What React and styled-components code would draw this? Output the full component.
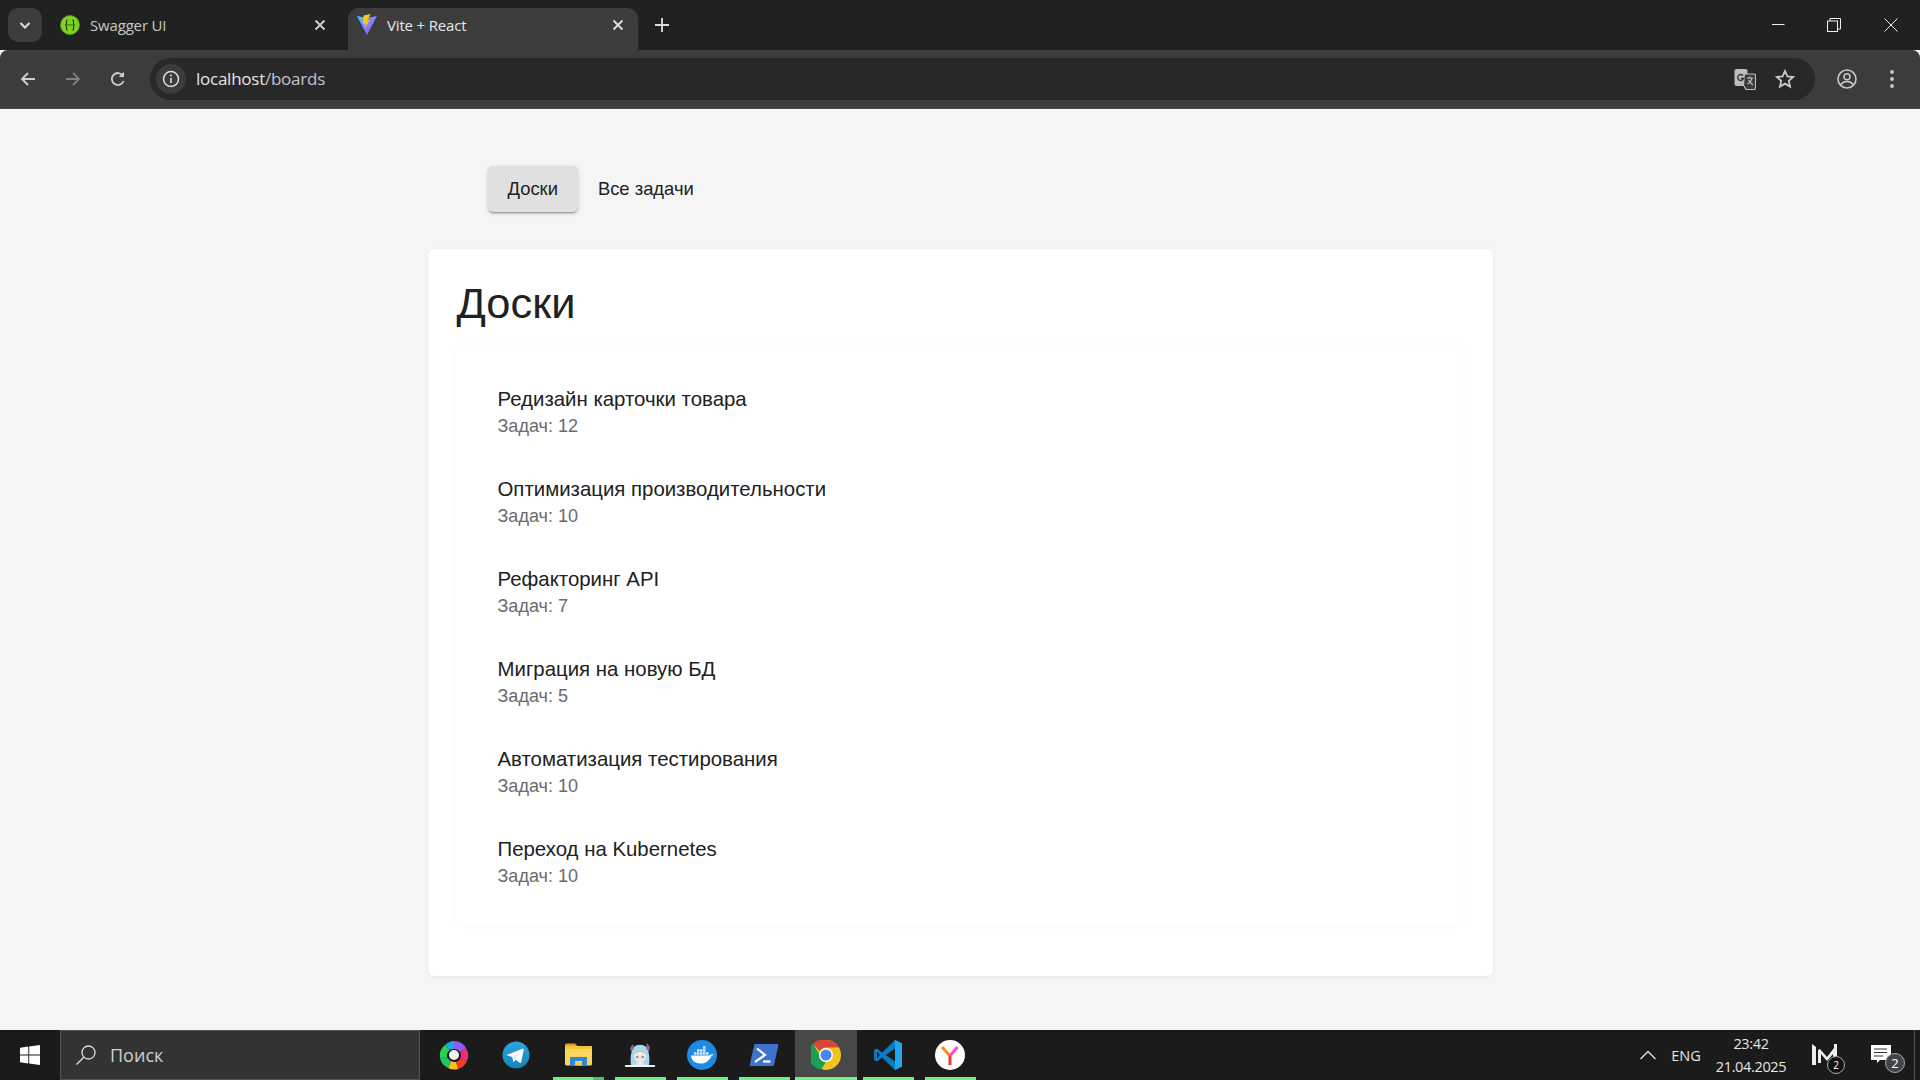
import React from 'react';
import styled, { createGlobalStyle } from 'styled-components';

const Global = createGlobalStyle`
  html, body { margin: 0; padding: 0; height: 100%; background: #f5f5f5; }
  #root { height: 100vh; }
  * { box-sizing: border-box; }
`;
const Screen = styled.div`
  height: 1080px; width: 1920px; display: flex; flex-direction: column; overflow: hidden;
  font-family: "Liberation Sans", Arial, sans-serif;
`;
const TabStrip = styled.div`
  height: 50px; background: #202222; display: flex; align-items: flex-start; padding: 8px 0 0 8px; flex: none;
`;
const TabMenu = styled.div`
  width: 34px; height: 34px; border-radius: 10px; background: #3c3c3c; display: flex; align-items: center; justify-content: center; margin-right: 18px; flex: none;
`;
const Tab = styled.div`
  width: ${p => p.$active ? 290 : 288}px; height: 42px; flex: none; padding: 0 ${p => p.$active ? 14 : 22}px 8px ${p => p.$active ? 9 : 0}px; display: flex; align-items: center; gap: 10px;
  background: ${p => p.$active ? '#3c3c3c' : 'transparent'}; border-radius: 11px 11px 0 0;
  margin-right: ${p => p.$active ? 17 : 0}px;
`;
const TabTitle = styled.span`
  flex: 1; font: 15px "Open Sans", sans-serif; color: ${p => p.$active ? '#e8e8e8' : '#c8c8c8'}; letter-spacing: -0.17px; white-space: nowrap;
`;
const NewTab = styled.div` margin-top: 10px; height: 14px; display: flex; `;
const StripSpacer = styled.div` flex: 1; `;
const WinControls = styled.div` display: flex; align-items: center; margin-top: -8px; height: 50px; padding-right: 1px; `;
const WinBtn = styled.div` width: 56.5px; display: flex; justify-content: center; `;
const Toolbar = styled.div`
  height: 59px; background: #3c3c3c; border-radius: 8px 8px 0 0; display: flex; align-items: center; padding: 0 0 1px 0; flex: none; border-bottom: 1px solid #4a4a4a;
`;
const NavIcon = styled.div`
  width: 45px; display: flex; justify-content: center; flex: none;
`;
const NavGroup = styled.div` display: flex; padding-left: 5px; width: 150px; flex: none; `;
const Omnibox = styled.div`
  width: 1665px; height: 42px; border-radius: 21px; background: #282828; display: flex; align-items: center; padding: 0 4px 0 6px; flex: none;
`;
const InfoChip = styled.div`
  width: 30px; height: 30px; border-radius: 50%; background: #3c3c3c; display: flex; align-items: center; justify-content: center; flex: none;
`;
const Url = styled.div`
  flex: 1; margin-left: 10px; font: 17px "Open Sans", sans-serif; color: #e6e6e6; letter-spacing: -0.25px;
  & span { color: #c4c4c4; }
`;
const OmniIcons = styled.div` display: flex; align-items: center; gap: 19px; padding-right: 16px; `;
const RightIcons = styled.div` display: flex; align-items: center; gap: 32px; padding-left: 22px; `;
const Page = styled.main`
  flex: 1; background: #f5f5f5; display: flex; flex-direction: column; align-items: center; padding-top: 57px; min-height: 0;
`;
const Nav = styled.nav`
  width: 1065px; display: flex; padding-left: 60px; height: 46px; align-items: center;
`;
const NavButton = styled.div`
  height: 46px; padding: 0 20px; display: flex; align-items: center; font-size: 18.4px; color: #212121; border-radius: 5px;
  background: ${p => p.$active ? '#e0e0e0' : 'transparent'};
  box-shadow: ${p => p.$active ? '0 3px 1px -2px rgba(0,0,0,.2), 0 2px 2px 0 rgba(0,0,0,.14), 0 1px 5px 0 rgba(0,0,0,.12)' : 'none'};
`;
const Card = styled.section`
  width: 1065px; height: 727px; margin-top: 37px; background: #fff; border-radius: 7px; padding: 0 30px 0 28px;
  box-shadow: 0 1px 4px rgba(0,0,0,.06);
`;
const Title = styled.h1`
  margin: 0; padding: 29px 0 0 1px; font-weight: 400; font-size: 43.4px; line-height: 50px; height: 96px; color: #212121;
`;
const ListBox = styled.div`
  height: 581px; border-radius: 7px; background: #fff; padding: 29px 0 0 42px; box-shadow: 0 0 4px rgba(0,0,0,.03);
`;
const Item = styled.div` height: 90px; padding-top: 10px; `;
const ItemName = styled.div` font-size: 20.4px; line-height: 30px; color: #212121; height: 30px; `;
const ItemCount = styled.div` font-size: 18px; line-height: 24px; color: #6b6b6b; `;
const Taskbar = styled.footer`
  height: 50px; background: #1b1b1b; display: flex; align-items: stretch; flex: none;
`;
const StartBtn = styled.div` width: 60px; display: flex; align-items: center; justify-content: center; flex: none; `;
const SearchBox = styled.div`
  width: 360px; background: #333; border: 1px solid #555; display: flex; align-items: center; padding-left: 14px; gap: 13px; flex: none;
`;
const SearchText = styled.span` font: 18px "Open Sans", sans-serif; color: #cfcfcf; `;
const AppRow = styled.div` display: flex; padding-left: 3px; `;
const AppCell = styled.div`
  width: 62px; display: flex; align-items: center; justify-content: center; position: relative;
  background: ${p => p.$focus ? '#484848' : 'transparent'};
  &::after {
    content: ''; display: ${p => p.$run ? 'block' : 'none'}; position: absolute; bottom: 0; height: 3px; left: ${p => p.$focus ? 0 : 5.5}px; right: ${p => p.$focus ? 0 : 5.5}px;
    background: ${p => p.$stack ? 'linear-gradient(90deg, #6ef08a 0 78%, #55b96b 78% 100%)' : '#6ef08a'};
  }
`;
const Tray = styled.div`
  margin-left: auto; display: flex; align-items: center; color: #e6e6e6; font: 14.5px "Open Sans", sans-serif; padding-right: 7px; border-right: 1px solid #555; margin-right: 5px;
`;
const TrayItem = styled.div` width: ${p => p.$w}px; display: flex; justify-content: center; align-items: center; position: relative; white-space: nowrap; `;
const Clock = styled.div` width: 88px; text-align: center; line-height: 23px; font-size: 14.5px; letter-spacing: -0.35px; `;
const BadgeDot = styled.span`
  position: absolute; right: ${p => p.$r}px; bottom: -8px; width: ${p => p.$s}px; height: ${p => p.$s}px; border-radius: 50%; background: ${p => p.$bg}; border: 1px solid #aaa; display: flex; align-items: center; justify-content: center; font: ${p => p.$fs}px "Open Sans", sans-serif; color: #fff;
`;

const Chevron = () => <svg width="14" height="14" viewBox="0 0 14 14"><path d="M2.500 5l4.500 4.500L11.500 5" fill="none" stroke="#ddd" strokeWidth="2"/></svg>;
const SwaggerIcon = () => <svg width="20" height="20" viewBox="0 0 20 20"><circle cx="10" cy="10" r="9.500" fill="#7ed321" stroke="#5c9e18" strokeWidth=".8"/><path d="M7.500 4.500C6 5 6.500 7 6.500 8.500c0 1-1 1.500-1.500 1.500.5 0 1.500.5 1.500 1.500 0 1.500-.5 3.500 1 4M12.500 4.500c1.500.5 1 2.500 1 4 0 1 1 1.500 1.500 1.500-.5 0-1.500.5-1.500 1.500 0 1.500.5 3.500-1 4" fill="none" stroke="#1f3b0a" strokeWidth="1.100"/><circle cx="8" cy="10" r=".7" fill="#1f3b0a"/><circle cx="10" cy="10" r=".7" fill="#1f3b0a"/><circle cx="12" cy="10" r=".7" fill="#1f3b0a"/></svg>;
const ViteIcon = () => <svg width="20" height="22" viewBox="0 0 20 22"><defs><linearGradient id="vg" x1="0" y1="0" x2="1" y2="1"><stop offset="0" stopColor="#41d1ff"/><stop offset="1" stopColor="#bd34fe"/></linearGradient></defs><path d="M0 2l10 19L20 2l-10 2z" fill="url(#vg)"/><path d="M13.500 0L6.500 1.500 6 10l2.500-.5-.5 4 5-7.500-2.500.5z" fill="#ffc517"/></svg>;
const Close = ({c='#d0d0d0'}) => <svg width="12" height="12" viewBox="0 0 12 12"><path d="M1.500 1.500l9 9M10.500 1.500l-9 9" stroke={c} strokeWidth="1.800"/></svg>;
const Plus = () => <svg width="14" height="14" viewBox="0 0 14 14"><path d="M7 0v14M0 7h14" stroke="#ddd" strokeWidth="1.800"/></svg>;
const Back = ({c='#d0d0d0', flip}) => <svg width="18" height="18" viewBox="0 0 18 18" style={flip ? {transform:'scaleX(-1)'} : undefined}><path d="M16 9H3M9 3L3 9l6 6" fill="none" stroke={c} strokeWidth="1.800"/></svg>;
const Reload = () => <svg width="18" height="18" viewBox="0 0 18 18"><path d="M14.500 11a6 6 0 1 1-.6-5.200" fill="none" stroke="#d0d0d0" strokeWidth="1.800"/><path d="M15 1.800V7h-5.200z" fill="#d0d0d0"/></svg>;
const Info = () => <svg width="18" height="18" viewBox="0 0 18 18"><circle cx="9" cy="9" r="7.500" fill="none" stroke="#e0e0e0" strokeWidth="1.500"/><path d="M9 8v5" stroke="#e0e0e0" strokeWidth="1.600"/><circle cx="9" cy="5.500" r="1" fill="#e0e0e0"/></svg>;
const Translate = () => <svg width="22" height="22" viewBox="0 0 22 22"><rect x="0.500" y="1" width="13" height="17" rx="2" fill="#bdbdbd"/><path d="M9 7.500a3 3 0 1 0 .6 3H6.800" fill="none" stroke="#333" strokeWidth="1.400"/><path d="M11 6h9a1.500 1.500 0 0 1 1.500 1.500V20a1.500 1.500 0 0 1-1.500 1.500h-8L10 18" fill="#3c3c3c" stroke="#bdbdbd" strokeWidth="1.200"/><path d="M13 10h6M16 8.500v1.500M18 10c-.5 3-2.500 5-4.500 6M14.500 12c1 2 3 4 4.500 5" fill="none" stroke="#c8c8c8" strokeWidth="1.100"/></svg>;
const Star = () => <svg width="20" height="20" viewBox="0 0 20 20"><path d="M10 2l2.400 5.400 5.800.6-4.400 3.900 1.300 5.700L10 14.600l-5.100 3 1.300-5.700L1.800 8l5.800-.6z" fill="none" stroke="#c8c8c8" strokeWidth="1.800"/></svg>;
const Profile = () => <svg width="20" height="20" viewBox="0 0 20 20"><circle cx="10" cy="10" r="9" fill="none" stroke="#c8c8c8" strokeWidth="1.600"/><circle cx="10" cy="7.800" r="3" fill="none" stroke="#c8c8c8" strokeWidth="1.500"/><path d="M4 15.500c1.500-2.500 4-3 6-3s4.500.5 6 3" fill="none" stroke="#c8c8c8" strokeWidth="1.500"/></svg>;
const Dots = () => <svg width="6" height="20" viewBox="0 0 6 20"><circle cx="3" cy="3" r="1.900" fill="#c8c8c8"/><circle cx="3" cy="10" r="1.900" fill="#c8c8c8"/><circle cx="3" cy="17" r="1.900" fill="#c8c8c8"/></svg>;
const Minimize = () => <svg width="14" height="12" viewBox="0 0 14 12"><path d="M1 5.500h12.500" stroke="#eee" strokeWidth="1"/></svg>;
const Restore = () => <svg width="14" height="14" viewBox="0 0 14 14"><rect x=".5" y="3" width="10" height="10.500" fill="none" stroke="#eee"/><path d="M3 3V.5h10.500V11H11" fill="none" stroke="#eee"/></svg>;
const WinClose = () => <svg width="14" height="14" viewBox="0 0 14 14"><path d="M.5.5l13 13M13.500.5l-13 13" stroke="#eee" strokeWidth="1"/></svg>;
const WinLogo = () => <svg width="20" height="20" viewBox="0 0 20 20"><path d="M0 2.800l8.300-1.200v8H0zM9.200 1.500L20 0v9.600H9.200zM0 10.500h8.300v8L0 17.200zM9.200 10.500H20V20L9.200 18.500z" fill="#fff"/></svg>;
const Loupe = () => <svg width="22" height="22" viewBox="0 0 22 22"><circle cx="13.500" cy="8.500" r="6.500" fill="none" stroke="#ddd" strokeWidth="1.300"/><path d="M8.800 13.200L1.500 20.500" stroke="#ddd" strokeWidth="1.300"/></svg>;
const Swirl = () => <svg width="30" height="30" viewBox="0 0 30 30"><path d="M15 1a14 14 0 0 1 12 7l-6 4a7 7 0 0 0-6-3z" fill="#8b5cf6"/><path d="M27 8a14 14 0 0 1 1 13l-7-2a7 7 0 0 0 0-7z" fill="#ec2d7a"/><path d="M28 21a14 14 0 0 1-9 8l-2-7a7 7 0 0 0 4-3z" fill="#f43f2e"/><path d="M19 29a14 14 0 0 1-10-1l3-7a7 7 0 0 0 5 1z" fill="#fbbf24"/><path d="M9 28a14 14 0 0 1-8-10l7-1a7 7 0 0 0 4 4z" fill="#22c55e"/><path d="M1 18A14 14 0 0 1 6 5l5 5a7 7 0 0 0-3 7z" fill="#2dd14f"/><path d="M6 5a14 14 0 0 1 9-4v8a7 7 0 0 0-4 1z" fill="#1ea7e1"/><circle cx="15" cy="15" r="5" fill="#f4f4f4"/></svg>;
const Telegram = () => <svg width="28" height="28" viewBox="0 0 28 28"><defs><linearGradient id="tg" x1="0" y1="0" x2="0" y2="1"><stop offset="0" stopColor="#2aa7dc"/><stop offset="1" stopColor="#1683b8"/></linearGradient></defs><circle cx="14" cy="14" r="13.500" fill="url(#tg)"/><path d="M5.500 13.800l15-6c.8-.3 1.500.2 1.200 1.300l-2.500 12c-.2.900-.7 1.100-1.400.7l-4-3-1.900 1.900c-.4.400-.7.400-.8-.2l-.7-4.500-4.800-1.500c-1-.3-1-1 .1-1.400z" fill="#fff"/><path d="M11.500 16l7-5.500-5 6.500-.6 3z" fill="#cfe6f3"/></svg>;
const Folder = () => <svg width="28" height="24" viewBox="0 0 28 24"><path d="M1 2a1.500 1.500 0 0 1 1.500-1.500H11l3 3h-13z" fill="#e0a31a"/><rect x="1" y="3" width="27" height="19.500" rx="1.500" fill="#fbd65c"/><rect x="1" y="3" width="27" height="3" fill="#f6c33e"/><path d="M6 14h17v8.500h-5V18h-7v4.500H6z" fill="#2f88d8"/><rect x="11" y="19.500" width="7" height="3" fill="#f8c948"/></svg>;
const Anime = () => <svg width="30" height="24" viewBox="0 0 30 24"><path d="M6 22c-1-7 0-15 3-18 3-3 9-3 12 0 3 3 4 11 3 18z" fill="#a9d9ec"/><path d="M22 0l3 4-1 5-3-4zM8 1L5 5l1 4 3-4z" fill="#8d6a78"/><circle cx="15" cy="13" r="6" fill="#fbe6da"/><path d="M8.500 12c1-6 12-6 13 0-3-2.500-4-3-6.500-3s-3.500.5-6.500 3z" fill="#8cc9e2"/><circle cx="12.300" cy="14" r="1.300" fill="#4aa0c8"/><circle cx="17.700" cy="14" r="1.300" fill="#4aa0c8"/><path d="M10 22l2-3h6l2 3z" fill="#dfeef5"/><rect x="0" y="22" width="30" height="2" fill="#f2f2f2"/></svg>;
const Docker = () => <svg width="30" height="30" viewBox="0 0 30 30"><circle cx="15" cy="15" r="15" fill="#1d8ae5"/><path d="M4 15.500h17.500c1 0 1.800-.5 2.500-1.200.9.400 1.900.3 2.800-.4-.3 1-1.200 1.700-2.300 1.800C23 20 19 23.500 13.500 23.500c-5.500 0-9-3-9.500-8z" fill="#fff"/><path d="M7 12.300h2.500v2.500H7zM10 12.300h2.500v2.500H10zM13 12.300h2.500v2.500H13zM16 12.300h2.500v2.500H16zM19 12.300h2.500v2.500H19zM10 9.300h2.500v2.500H10zM13 9.300h2.500v2.500H13zM16 9.300h2.500v2.500H16zM16 6.300h2.500v2.500H16z" fill="#dcecf9"/></svg>;
const PowerShell = () => <svg width="30" height="24" viewBox="0 0 30 24"><path d="M6.500 1h22c.7 0 1 .5.9 1.100L25 22c-.1.6-.6 1-1.300 1h-22C1 23 .6 22.500.7 21.900L5.200 2C5.300 1.400 5.800 1 6.500 1z" fill="#3f72cc"/><path d="M8 5.500l8 6.500-10 7" fill="none" stroke="#fff" strokeWidth="2.200"/><path d="M14 18.500h7.500" stroke="#fff" strokeWidth="2.200"/></svg>;
const Chrome = () => <svg width="30" height="30" viewBox="0 0 30 30"><circle cx="15" cy="15" r="15" fill="#f2c320"/><path d="M15 0a15 15 0 0 1 13 7.500H15a7.500 7.500 0 0 0-6.500 3.750L2 3.500A15 15 0 0 1 15 0z" fill="#db4437"/><path d="M2 3.500l6.500 11.250a7.500 7.500 0 0 0 6 7.750L10.500 29.300A15 15 0 0 1 2 3.500z" fill="#1f9d55"/><circle cx="15" cy="15" r="7" fill="#fff"/><circle cx="15" cy="15" r="5.500" fill="#4a86e8"/></svg>;
const VSCode = () => <svg width="30" height="30" viewBox="0 0 30 30"><path d="M22 0l7 3.500v23L22 30 9 17.500l-5 4-3-1.500v-10l3-1.500 5 4z" fill="#0a7cc4"/><path d="M22 0l7 3.500v23L22 30z" fill="#22a5ef"/><path d="M22 8.500L13 15l9 6.500z" fill="#1b1b1b"/><path d="M4 11.500L7 15l-3 3.500z" fill="#1b1b1b"/></svg>;
const Yandex = () => <svg width="30" height="30" viewBox="0 0 30 30"><circle cx="15" cy="15" r="15" fill="#fff"/><path d="M15 16v9" fill="none" stroke="#f0392b" strokeWidth="3"/><path d="M7 7l8 9" fill="none" stroke="#fb8c1e" strokeWidth="3"/><path d="M22.500 7L15 16" fill="none" stroke="#f04fc0" strokeWidth="3"/></svg>;
const Caret = () => <svg width="18" height="10" viewBox="0 0 18 10"><path d="M1.500 9L9 1.500 16.500 9" fill="none" stroke="#e0e0e0" strokeWidth="1.300"/></svg>;
const MLogo = () => <svg width="28" height="22" viewBox="0 0 28 22"><path d="M0 0l4 3v18H0zM6 6l2-1 7 8 7-9v-4l3-0v19h-4v-9l-6 7-6-7v9H6z" fill="#eee"/></svg>;
const Msg = () => <svg width="22" height="20" viewBox="0 0 22 20"><path d="M0 0h20v15H9l-3 3v-3H0z" fill="#fff"/><path d="M3 4h13M3 7.500h13M3 11h9" stroke="#333" strokeWidth="1"/></svg>;

const boards = [
  ['Редизайн карточки товара', 12],
  ['Оптимизация производительности', 10],
  ['Рефакторинг API', 7],
  ['Миграция на новую БД', 5],
  ['Автоматизация тестирования', 10],
  ['Переход на Kubernetes', 10],
];
const apps = [
  { I: Swirl }, { I: Telegram }, { I: Folder, run: true, stack: true }, { I: Anime, run: true }, { I: Docker, run: true },
  { I: PowerShell, run: true }, { I: Chrome, run: true, focus: true }, { I: VSCode, run: true }, { I: Yandex, run: true },
];

export default function App() {
  return (
    <Screen>
      <Global />
      <TabStrip>
        <TabMenu><Chevron /></TabMenu>
        <Tab><SwaggerIcon /><TabTitle>Swagger UI</TabTitle><Close /></Tab>
        <Tab $active><ViteIcon /><TabTitle $active>Vite + React</TabTitle><Close c="#e0e0e0" /></Tab>
        <NewTab><Plus /></NewTab>
        <StripSpacer />
        <WinControls><WinBtn><Minimize /></WinBtn><WinBtn><Restore /></WinBtn><WinBtn><WinClose /></WinBtn></WinControls>
      </TabStrip>
      <Toolbar>
        <NavGroup>
          <NavIcon><Back /></NavIcon>
          <NavIcon><Back c="#7f7f7f" flip /></NavIcon>
          <NavIcon><Reload /></NavIcon>
        </NavGroup>
        <Omnibox>
          <InfoChip><Info /></InfoChip>
          <Url>localhost<span>/boards</span></Url>
          <OmniIcons><Translate /><Star /></OmniIcons>
        </Omnibox>
        <RightIcons><Profile /><Dots /></RightIcons>
      </Toolbar>
      <Page>
        <Nav>
          <NavButton $active>Доски</NavButton>
          <NavButton>Все задачи</NavButton>
        </Nav>
        <Card>
          <Title>Доски</Title>
          <ListBox>
            {boards.map(([n, c]) => (
              <Item key={n}>
                <ItemName>{n}</ItemName>
                <ItemCount>Задач: {c}</ItemCount>
              </Item>
            ))}
          </ListBox>
        </Card>
      </Page>
      <Taskbar>
        <StartBtn><WinLogo /></StartBtn>
        <SearchBox><Loupe /><SearchText>Поиск</SearchText></SearchBox>
        <AppRow>
          {apps.map(({ I, run, focus, stack }, i) => (
            <AppCell key={i} $run={run} $focus={focus} $stack={stack}><I /></AppCell>
          ))}
        </AppRow>
        <Tray>
          <TrayItem $w={34}><Caret /></TrayItem>
          <TrayItem $w={42}>ENG</TrayItem>
          <Clock>23:42<br />21.04.2025</Clock>
          <TrayItem $w={62}><MLogo /><BadgeDot $r={12} $s={18} $bg="#111" $fs={10}>2</BadgeDot></TrayItem>
          <TrayItem $w={50}><Msg /><BadgeDot $r={2} $s={20} $bg="#444" $fs={13}>2</BadgeDot></TrayItem>
        </Tray>
      </Taskbar>
    </Screen>
  );
}
